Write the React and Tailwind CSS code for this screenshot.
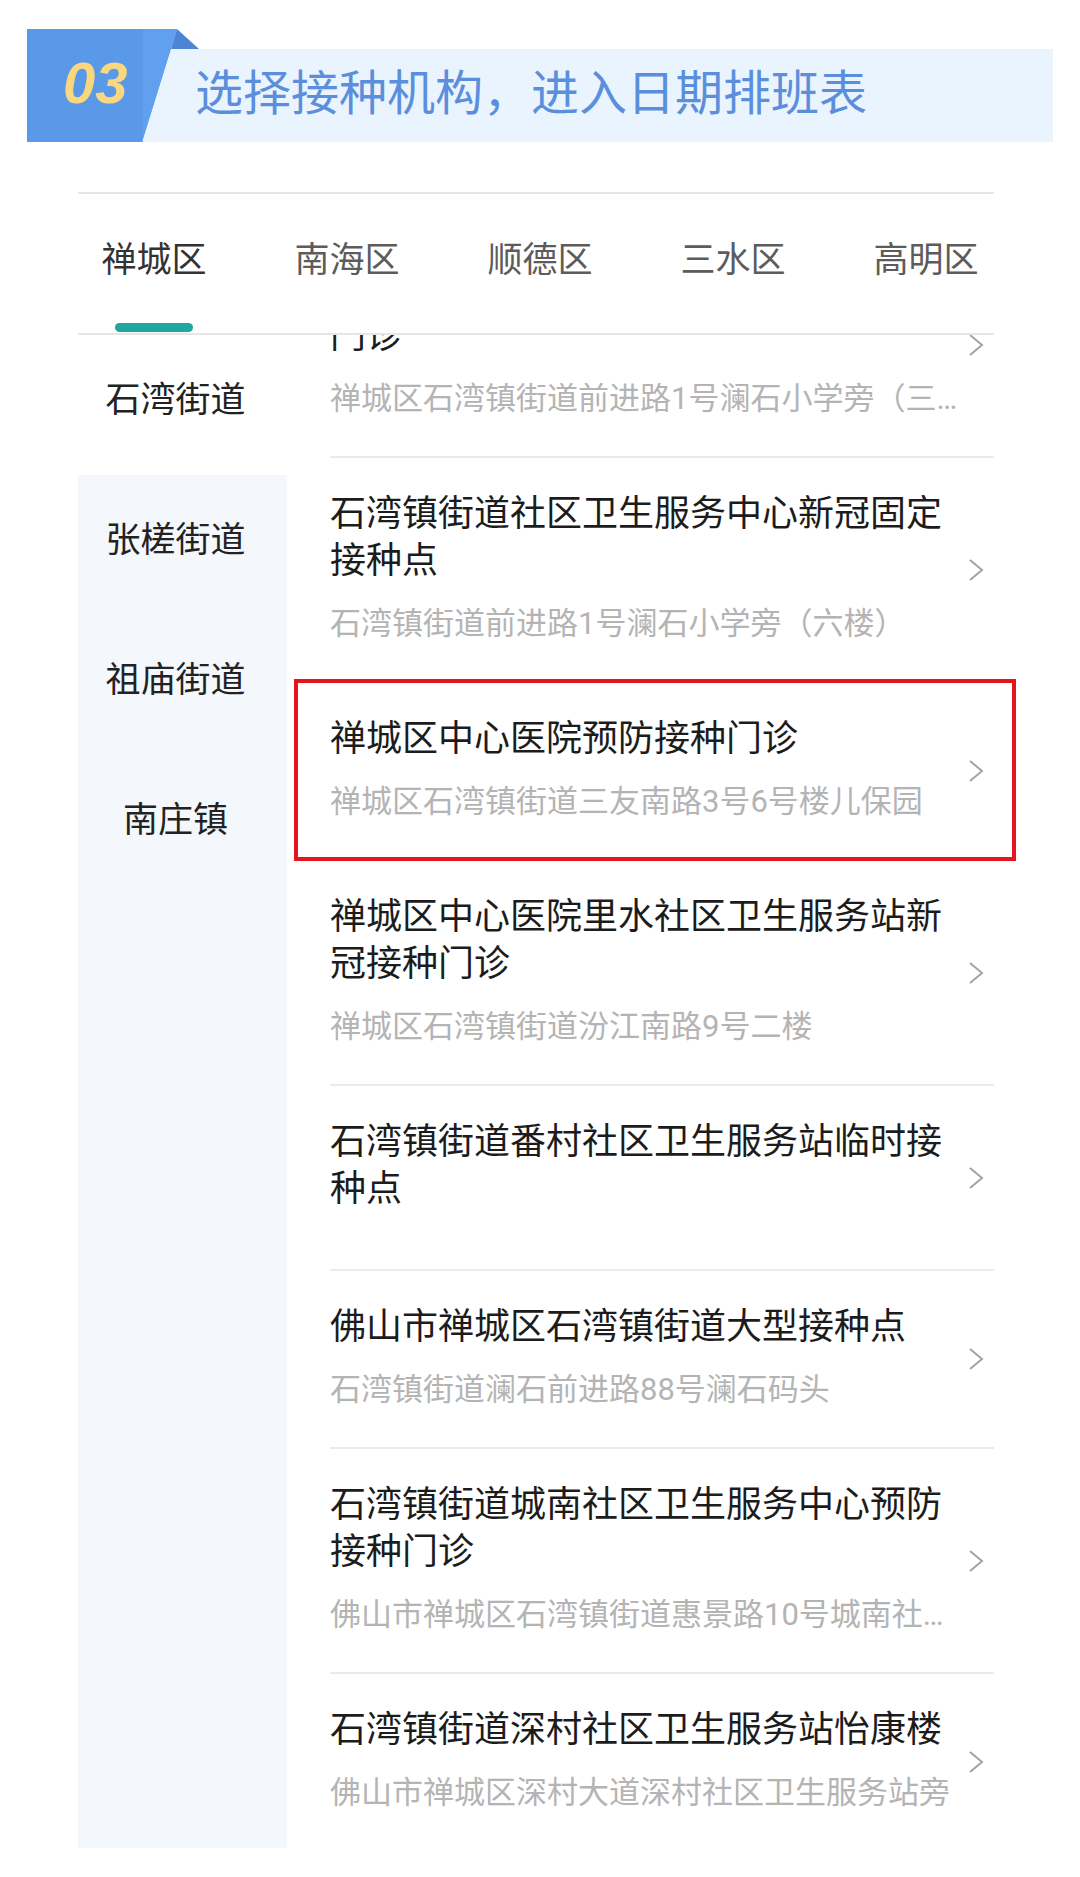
import React from 'react';

const districts = ['禅城区', '南海区', '顺德区', '三水区', '高明区'];
const streets = ['石湾街道', '张槎街道', '祖庙街道', '南庄镇'];

const sites = [
    { title: '石湾镇街道社区卫生服务中心预防接种门诊', addr: '禅城区石湾镇街道前进路1号澜石小学旁（三楼）' },
    { title: '石湾镇街道社区卫生服务中心新冠固定接种点', addr: '石湾镇街道前进路1号澜石小学旁（六楼）' },
    { title: '禅城区中心医院预防接种门诊', addr: '禅城区石湾镇街道三友南路3号6号楼儿保园', marked: true },
    { title: '禅城区中心医院里水社区卫生服务站新冠接种门诊', addr: '禅城区石湾镇街道汾江南路9号二楼' },
    { title: '石湾镇街道番村社区卫生服务站临时接种点', addr: '' },
    { title: '佛山市禅城区石湾镇街道大型接种点', addr: '石湾镇街道澜石前进路88号澜石码头' },
    { title: '石湾镇街道城南社区卫生服务中心预防接种门诊', addr: '佛山市禅城区石湾镇街道惠景路10号城南社区卫生服务中心' },
    { title: '石湾镇街道深村社区卫生服务站怡康楼', addr: '佛山市禅城区深村大道深村社区卫生服务站旁' },
];

function Chevron() {
    return (
        <svg width="16" height="24" viewBox="0 0 16 24" className="mr-[10px] shrink-0">
            <polyline points="2,2 14,12 2,22" fill="none" stroke="#a3a3a3" strokeWidth="2" />
        </svg>
    );
}

function SiteRow({ site }) {
    return (
        <div className="relative flex items-center justify-between border-b-2 border-[#ebebeb]">
            <div className={`w-[630px] pt-[33px] ${site.addr ? 'pb-[39px]' : 'pb-[56px]'}`}>
                <div className="text-[36px] leading-[47px] text-[#1c1c1c]">{site.title}</div>
                {site.addr && (
                    <div className="mt-[21px] text-[31px] leading-[36px] text-[#b4b4b4] whitespace-nowrap overflow-hidden text-ellipsis">
                        {site.addr}
                    </div>
                )}
            </div>
            <Chevron />
            {site.marked && (
                <div className="absolute -left-[36px] -right-[22px] -top-[4px] -bottom-[2px] border-[4px] border-[#e3161f]"></div>
            )}
        </div>
    );
}

export default function App() {
    return (
        <div
            className="w-[1080px] h-[1877px] bg-white overflow-hidden"
            style={{ fontFamily: 'Roboto, "Noto Sans CJK SC", sans-serif' }}
        >
            {/* step banner */}
            <div className="relative ml-[27px] mt-[49px] w-[1026px] h-[93px] bg-[#eaf4fe] flex items-center pl-[168px] pb-[4px]">
                <span className="text-[48px] leading-none text-[#5b8fdc]">选择接种机构，进入日期排班表</span>
                <svg width="175" height="113" viewBox="0 0 175 113" className="absolute left-0 -top-[20px]">
                    <polygon points="0,0 150,0 115,113 0,113" fill="#5a99e8" />
                    <polygon points="116,0 150,0 115,113 116,113" fill="#60a0ef" />
                    <polygon points="150,0 172,20 144,20" fill="#4d84d6" />
                </svg>
                <span
                    className="absolute left-[36px] top-[4px] text-[58px] font-bold italic text-[#f8d77f] leading-[60px]"
                    style={{ fontFamily: '"Liberation Sans", Arial, sans-serif' }}
                >
                    03
                </span>
            </div>

            {/* district tabs */}
            <div className="ml-[78px] mt-[50px] w-[916px] h-[143px] border-y-2 border-[#e6e6e6] flex pl-[24px] gap-[89px]">
                {districts.map((d, i) => (
                    <div key={d} className="w-[104px] flex flex-col items-center pt-[45px]">
                        <span className={`text-[35px] leading-[44px] whitespace-nowrap ${i === 0 ? 'text-[#333333]' : 'text-[#5c5c5c]'}`}>{d}</span>
                        {i === 0 && <div className="mt-[40px] w-[78px] h-[9px] rounded-full bg-[#1ea89f]"></div>}
                    </div>
                ))}
            </div>

            {/* streets + sites */}
            <div className="flex ml-[78px]">
                <div className="w-[209px] h-[1513px] bg-[#f4f7fb]">
                    {streets.map((s, i) => (
                        <div
                            key={s}
                            className={`h-[140px] flex items-center justify-center pr-[14px] pb-[7px] text-[35px] text-[#222222] ${i === 0 ? 'bg-white' : ''}`}
                        >
                            {s}
                        </div>
                    ))}
                </div>
                <div className="ml-[43px] w-[664px] h-[1513px] overflow-y-clip">
                    <div className="-mt-[102px]">
                        {sites.map((site, i) => (
                            <SiteRow key={i} site={site} />
                        ))}
                    </div>
                </div>
            </div>
        </div>
    );
}
